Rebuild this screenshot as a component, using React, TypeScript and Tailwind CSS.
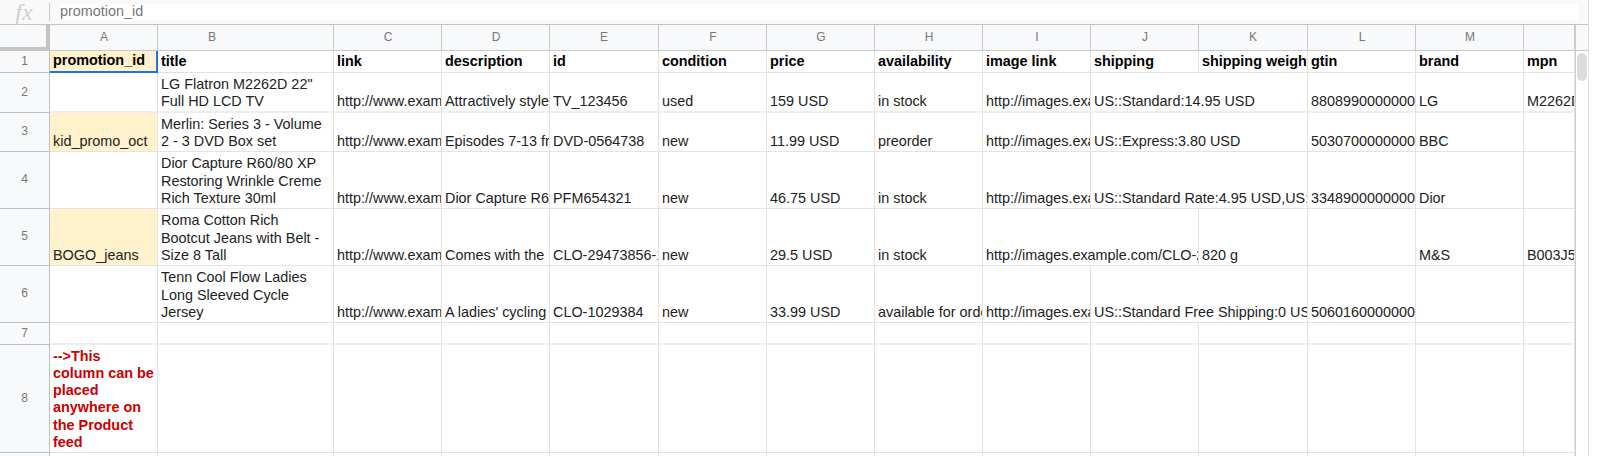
import React from "react";

type Cell = {
  text?: string;
  span?: boolean;
  fill?: boolean;
  multi?: boolean;
};

const columns = ["A", "B", "C", "D", "E", "F", "G", "H", "I", "J", "K", "L", "M", "N"];

const headers = [
  "promotion_id",
  "title",
  "link",
  "description",
  "id",
  "condition",
  "price",
  "availability",
  "image link",
  "shipping",
  "shipping weight",
  "gtin",
  "brand",
  "mpn",
];

const rows: { num: number; cells: Cell[]; thick?: boolean }[] = [
  {
    num: 2,
    thick: true,
    cells: [
      {},
      { text: 'LG Flatron M2262D 22" Full HD LCD TV', multi: true },
      { text: "http://www.example.com/TV_123456" },
      { text: "Attractively styled and packed" },
      { text: "TV_123456" },
      { text: "used" },
      { text: "159 USD" },
      { text: "in stock" },
      { text: "http://images.example.com/TV_123456.png" },
      { text: "US::Standard:14.95 USD", span: true },
      { text: "8808990000000" },
      { text: "LG" },
      { text: "M2262D-PC" },
    ],
  },
  {
    num: 3,
    cells: [
      { text: "kid_promo_oct", fill: true },
      { text: "Merlin: Series 3 - Volume 2 - 3 DVD Box set", multi: true },
      { text: "http://www.example.com/DVD-0564738" },
      { text: "Episodes 7-13 from the third" },
      { text: "DVD-0564738" },
      { text: "new" },
      { text: "11.99 USD" },
      { text: "preorder" },
      { text: "http://images.example.com/DVD-0564738.png" },
      { text: "US::Express:3.80 USD", span: true },
      { text: "5030700000000" },
      { text: "BBC" },
      {},
    ],
  },
  {
    num: 4,
    cells: [
      {},
      { text: "Dior Capture R60/80 XP Restoring Wrinkle Creme Rich Texture 30ml", multi: true },
      { text: "http://www.example.com/PFM654321" },
      { text: "Dior Capture R60/80 XP" },
      { text: "PFM654321" },
      { text: "new" },
      { text: "46.75 USD" },
      { text: "in stock" },
      { text: "http://images.example.com/PFM654321.png" },
      { text: "US::Standard Rate:4.95 USD,US::Express", span: true },
      { text: "3348900000000" },
      { text: "Dior" },
      {},
    ],
  },
  {
    num: 5,
    cells: [
      { text: "BOGO_jeans", fill: true },
      { text: "Roma Cotton Rich Bootcut Jeans with Belt - Size 8 Tall", multi: true },
      { text: "http://www.example.com/CLO-29473856" },
      { text: "Comes with the belt" },
      { text: "CLO-29473856-1" },
      { text: "new" },
      { text: "29.5 USD" },
      { text: "in stock" },
      { text: "http://images.example.com/CLO-29473856-1.jpg", span: true },
      { text: "820 g" },
      {},
      { text: "M&S" },
      { text: "B003J5F5EY" },
    ],
  },
  {
    num: 6,
    cells: [
      {},
      { text: "Tenn Cool Flow Ladies Long Sleeved Cycle Jersey", multi: true },
      { text: "http://www.example.com/CLO-1029384" },
      { text: "A ladies' cycling jersey" },
      { text: "CLO-1029384" },
      { text: "new" },
      { text: "33.99 USD" },
      { text: "available for order" },
      { text: "http://images.example.com/CLO-1029384.jpg" },
      { text: "US::Standard Free Shipping:0 USD", span: true },
      { text: "5060160000000" },
      {},
      {},
    ],
  },
];

const cellBase = "flex min-w-0 items-end overflow-hidden border-r border-b border-[#e2e3e3] pl-[3px] pb-px";

const DataCell: React.FC<{ cell: Cell; thick?: boolean }> = ({ cell, thick }) => (
  <div
    className={`${cellBase} ${cell.span ? "col-span-2" : ""} ${cell.fill ? "bg-[#fff2cc]" : ""} ${
      thick ? "border-b-2 border-b-[#eeeeee]" : ""
    }`}
  >
    <span className={cell.multi ? "pr-1" : "whitespace-nowrap"}>{cell.text}</span>
  </div>
);

const RowHeader: React.FC<{ num: number }> = ({ num }) => (
  <div className="flex items-center justify-center border-r border-b border-[#c0c0c0] bg-[#f8f9fa] text-[12px] text-[#777777]">
    {num}
  </div>
);

const EmptyCells: React.FC<{ count?: number; thick?: boolean }> = ({ count = 14, thick }) => (
  <>
    {Array.from({ length: count }).map((_, i) => (
      <div
        key={i}
        className={`border-r border-b border-[#e2e3e3] ${thick ? "border-b-2 border-b-[#eeeeee]" : ""}`}
      />
    ))}
  </>
);

const App: React.FC = () => {
  return (
    <div className="flex h-[456px] w-[1600px] overflow-hidden bg-white font-['Liberation_Sans',Arial,sans-serif] text-[14.4px] leading-[17.2px] text-[#222222]">
      <div className="flex w-[1589px] flex-col border-r border-[#dddddd]">
        {/* formula bar */}
        <div className="flex h-[25px] shrink-0 items-center border-b border-[#c4c4c4] bg-[#f9f9f9]">
          <div className="flex w-[49px] justify-center pr-[1px] font-['Liberation_Serif',serif] text-[24px] leading-[24px] text-[#cfcfcf] italic">
            fx
          </div>
          <div className="h-[18px] w-px bg-[#c8c8c8]" />
          <div className="ml-2.5 mr-2.5 flex h-[16px] flex-1 items-center bg-white pb-px text-[#777777]">
            promotion_id
          </div>
        </div>

        <div className="flex min-h-0 flex-1">
          <div className="grid w-[1575px] shrink-0 grid-cols-[50px_108px_176px_108px_108px_109px_108px_108px_108px_108px_108px_109px_108px_108px_51px] grid-rows-[26px_22px_40px_39px_57px_57px_57px_22px_108px_8px] overflow-hidden">
            {/* column letters */}
            <div className="border-r-4 border-b-4 border-[#c4c4c4] bg-[#f8f9fa]" />
            {columns.map((c) => (
              <div
                key={c}
                className="overflow-hidden border-r border-b border-[#c8c8c8] bg-[#f8f9fa] last:border-r-0"
              >
                <div className="flex h-full w-[108px] items-center justify-center text-[12px] text-[#777777]">
                  {c}
                </div>
              </div>
            ))}

            {/* row 1 */}
            <RowHeader num={1} />
            {headers.map((h, i) => (
              <div
                key={h}
                className={
                  i === 0
                    ? "flex items-center overflow-hidden border-r-2 border-b-2 border-[#1a73e8] bg-[#fff2cc] pl-[3px] font-bold"
                    : "flex items-center overflow-hidden border-r border-b border-[#e2e3e3] pl-[3px] font-bold"
                }
              >
                <span className="whitespace-nowrap text-black">{h}</span>
              </div>
            ))}

            {/* rows 2 - 6 */}
            {rows.map((r) => (
              <React.Fragment key={r.num}>
                <RowHeader num={r.num} />
                {r.cells.map((c, i) => (
                  <DataCell key={i} cell={c} thick={r.thick} />
                ))}
              </React.Fragment>
            ))}

            {/* row 7 */}
            <RowHeader num={7} />
            <EmptyCells thick />

            {/* row 8 */}
            <RowHeader num={8} />
            <div className={`${cellBase} pr-[2px] font-bold text-[#cc0000]`}>
              <span>--&gt;This column can be placed anywhere on the Product feed</span>
            </div>
            <EmptyCells count={13} />

            {/* row 9, cut off */}
            <div className="border-r border-[#c0c0c0] bg-[#f8f9fa]" />
            {Array.from({ length: 14 }).map((_, i) => (
              <div key={i} className="border-r border-[#e2e3e3]" />
            ))}
          </div>

          {/* scrollbar */}
          <div className="flex flex-1 flex-col border-l border-[#cccccc]">
            <div className="h-[26px] shrink-0 border-b border-[#c8c8c8] bg-[#f8f9fa]" />
            <div className="px-px pt-0.5">
              <div className="h-[28px] w-[10px] rounded-md bg-[#dadce0]" />
            </div>
          </div>
        </div>
      </div>
    </div>
  );
};

export default App;
